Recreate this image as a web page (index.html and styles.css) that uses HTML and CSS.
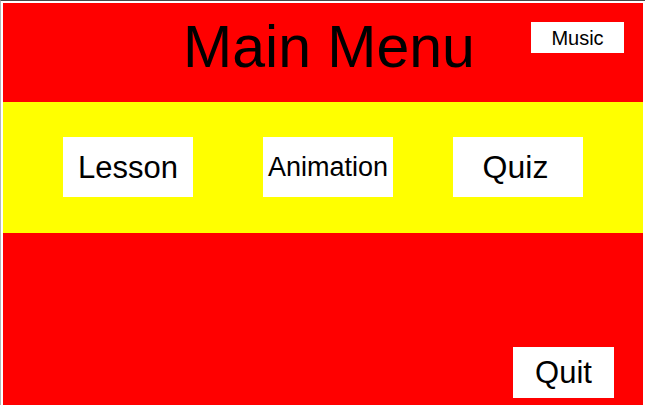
FILE: index.html
```html
<!DOCTYPE html>
<html>
<head>
<meta charset="utf-8">
<title>Main Menu</title>
<link rel="stylesheet" href="styles.css">
</head>
<body>
<div class="frame">
  <div class="screen">
    <header class="header">
      <span class="spacer"></span>
      <h1 class="title">Main Menu</h1>
      <button class="btn music">Music</button>
    </header>
    <nav class="band">
      <button class="btn option lesson">Lesson</button>
      <button class="btn option animation">Animation</button>
      <button class="btn option quiz">Quiz</button>
    </nav>
    <footer class="footer">
      <button class="btn quit">Quit</button>
    </footer>
  </div>
</div>
</body>
</html>
```
FILE: styles.css
```css
html, body {
  margin: 0;
  padding: 0;
  background: #ffffff;
  overflow: hidden;
}
body {
  width: 645px;
  height: 405px;
  font-family: "Liberation Sans", Arial, sans-serif;
}
.frame {
  box-sizing: border-box;
  width: 645px;
  height: 405px;
  border-top: 1px solid #4a4a4a;
  border-left: 1px solid #b4b4b4;
  padding: 2px 2px 0 2px;
}
.screen {
  display: flex;
  flex-direction: column;
  height: 402px;
  background: #ff0000;
}
.btn {
  border: none;
  margin: 0;
  padding: 0;
  background: #ffffff;
  color: #000000;
  font-family: "Liberation Sans", Arial, sans-serif;
  display: flex;
  align-items: center;
  justify-content: center;
  line-height: 1;
}
.header {
  height: 99px;
  box-sizing: border-box;
  display: grid;
  grid-template-columns: 1fr auto 1fr;
  align-items: start;
  padding: 0 19px 0 31px;
}
.title {
  margin: 15px 0 0 0;
  font-size: 59px;
  line-height: 58px;
  font-weight: normal;
  color: #000000;
  white-space: nowrap;
}
.music {
  justify-self: end;
  margin-top: 19px;
  width: 93px;
  height: 31px;
  font-size: 20px;
}
.band {
  height: 131px;
  box-sizing: border-box;
  background: #ffff00;
  display: flex;
  align-items: flex-start;
  padding: 35px 0 0 60px;
}
.option {
  width: 130px;
  height: 60px;
}
.lesson {
  font-size: 31px;
  margin-right: 70px;
}
.animation {
  font-size: 27px;
  margin-right: 60px;
}
.quiz {
  font-size: 32px;
  padding-right: 5px;
}
.footer {
  flex: 1;
  display: flex;
  justify-content: flex-end;
  align-items: flex-end;
  padding: 0 29px 7px 0;
}
.quit {
  width: 101px;
  height: 51px;
  font-size: 31px;
}
```
